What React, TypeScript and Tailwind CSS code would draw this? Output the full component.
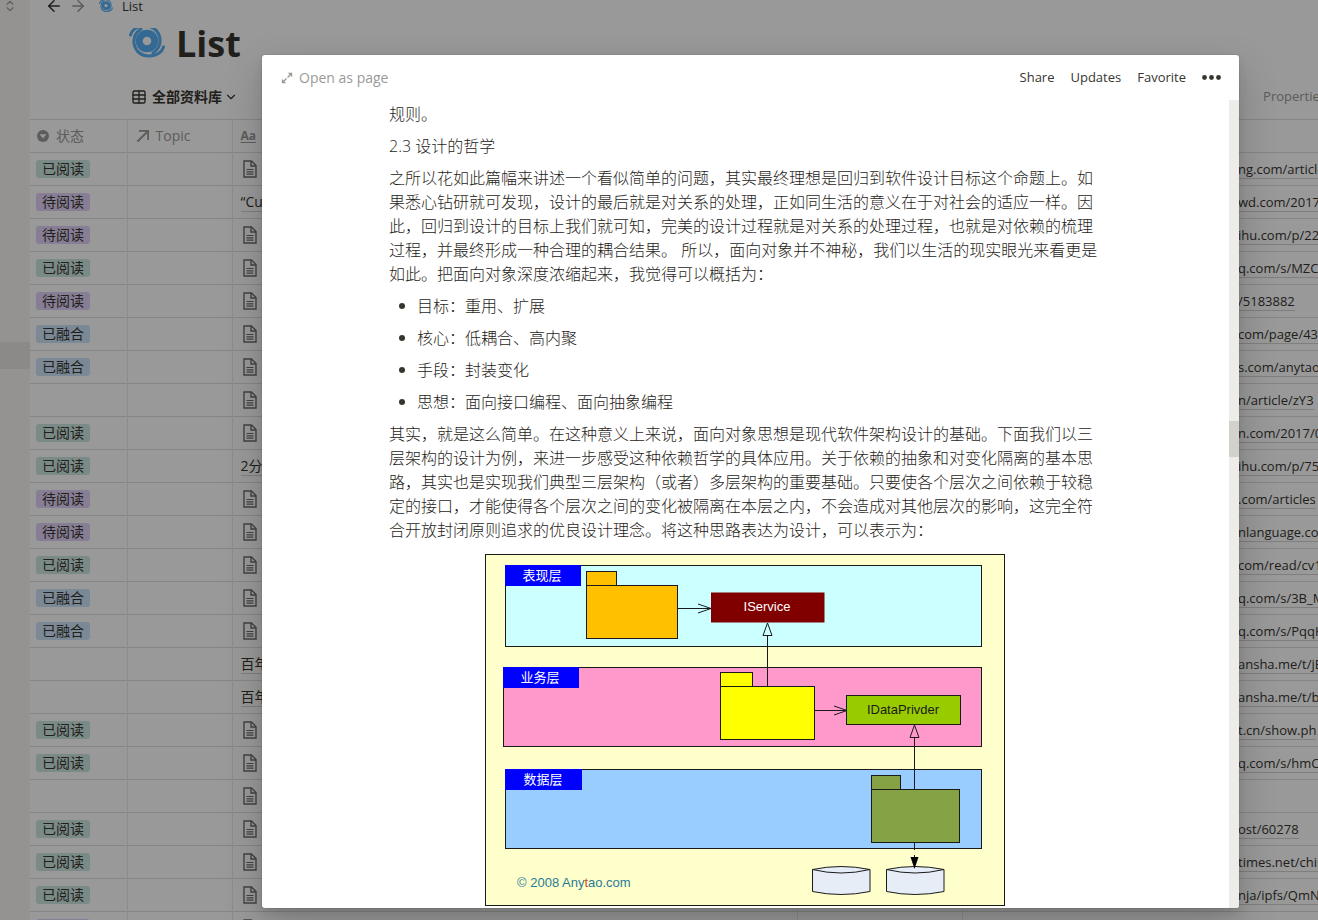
import React from 'react';
import { ArrowLeft, ArrowRight, ChevronDown, ChevronsUpDown, Table } from 'lucide-react';

type Status = 'read' | 'unread' | 'merged';

interface Row {
  status?: Status;
  title?: string;
  url?: string;
}

const STATUS: Record<Status, { label: string; className: string }> = {
  read: { label: '已阅读', className: 'bg-[#cce7e1]' },
  unread: { label: '待阅读', className: 'bg-[#e1d3f8]' },
  merged: { label: '已融合', className: 'bg-[#cce4f9]' },
};

const rows: Row[] = [
  { status: 'read', url: 'ng.com/articles' },
  { status: 'unread', title: '“Cu', url: 'wd.com/2017/' },
  { status: 'unread', url: 'ihu.com/p/22' },
  { status: 'read', url: 'q.com/s/MZC' },
  { status: 'unread', url: '/5183882' },
  { status: 'merged', url: 'com/page/43' },
  { status: 'merged', url: 's.com/anytao' },
  { url: 'n/article/zY3' },
  { status: 'read', url: 'n.com/2017/0' },
  { status: 'read', title: '2分', url: 'ihu.com/p/75' },
  { status: 'unread', url: '.com/articles' },
  { status: 'unread', url: 'nlanguage.com' },
  { status: 'read', url: 'com/read/cv1' },
  { status: 'merged', url: 'q.com/s/3B_M' },
  { status: 'merged', url: 'q.com/s/PqqH' },
  { title: '百年', url: 'ansha.me/t/jB' },
  { title: '百年', url: 'ansha.me/t/b' },
  { status: 'read', url: 't.cn/show.ph' },
  { status: 'read', url: 'q.com/s/hmC' },
  {},
  { status: 'read', url: 'ost/60278' },
  { status: 'read', url: 'times.net/chin' },
  { status: 'read', url: 'nja/ipfs/QmN' },
  { status: 'unread' },
];

const bullets = ['目标：重用、扩展', '核心：低耦合、高内聚', '手段：封装变化', '思想：面向接口编程、面向抽象编程'];

function Cyclone({ className }: { className: string }) {
  const arm = 'M12 5C6 9 4.500 14 5 19C6 27 12 32 20 32C28 32 33 28 34.500 23';
  return (
    <svg viewBox="0 0 36 36" className={className} fill="none" stroke="#55b0f5" strokeLinecap="round">
      <circle cx="18" cy="17" r="7.8" strokeWidth="7" />
      <path d={arm} strokeWidth="3" />
      <path d={arm} strokeWidth="3" transform="rotate(180 18 17)" />
    </svg>
  );
}

function DocIcon() {
  return (
    <svg viewBox="0 0 14 18" className="mb-px ml-0.5 h-[18px] w-3.5" fill="none" stroke="#6f6e6a" strokeWidth="1.4">
      <path d="M1 1H8.500L13 5.500V17H1Z" />
      <path d="M8 1V6H13" />
      <path d="M3.500 9.500H10.500M3.500 11.800H10.500M3.500 14.100H10.500" strokeWidth="1.2" />
    </svg>
  );
}

function StatusIcon() {
  return (
    <svg viewBox="0 0 14 14" className="h-3 w-3">
      <circle cx="7" cy="7" r="7" fill="#9b9a97" />
      <path d="M3 5H11L7 10Z" fill="#fff" />
    </svg>
  );
}

function RelationIcon() {
  return (
    <svg viewBox="0 0 14 14" className="h-3.5 w-3.5" fill="none" stroke="#9b9a97" strokeWidth="1.8">
      <path d="M1.500 12.500L12 2M3 1.900H12.100V11" />
    </svg>
  );
}

function ExpandIcon() {
  return (
    <svg viewBox="0 0 12 12" className="h-3 w-3" fill="#9b9a97" stroke="#9b9a97">
      <path d="M2.500 9.500L9.500 2.500" strokeWidth="1.4" strokeDasharray="4.2 1.5" />
      <path d="M6.800 0.800H11.200V5.200Z" stroke="none" />
      <path d="M0.800 6.800V11.200H5.200Z" stroke="none" />
    </svg>
  );
}

function Sidebar() {
  return (
    <aside className="w-[30px] shrink-0 bg-[#f7f6f3]">
      <ChevronsUpDown className="ml-[3px] -mt-px h-3.5 w-3.5 text-[#9b9a97]" />
      <div className="mt-[329px] h-[27px] bg-[#e8e7e4]" />
    </aside>
  );
}

function DatabaseTable() {
  return (
    <table className="w-full table-fixed border-collapse text-left text-sm">
      <colgroup>
        <col className="w-[97px]" />
        <col className="w-[105px]" />
        <col className="w-[565px]" />
        <col className="w-[165px]" />
        <col className="w-[268px]" />
        <col />
      </colgroup>
      <thead>
        <tr className="h-[33px] border-y border-[#dededc] text-[#9b9a97]">
          <th className="border-r border-[#e9e9e7] p-0 font-normal">
            <span className="flex items-center gap-[7px] pl-[7px]">
              <StatusIcon />
              状态
            </span>
          </th>
          <th className="border-r border-[#e9e9e7] p-0 font-normal">
            <span className="flex items-center gap-1.5 pl-2">
              <RelationIcon />
              Topic
            </span>
          </th>
          <th className="border-r border-[#e9e9e7] p-0 pl-2 text-xs font-bold underline underline-offset-2">Aa</th>
          <th className="border-r border-[#e9e9e7] p-0" />
          <th className="p-0" />
          <th className="p-0" />
        </tr>
      </thead>
      <tbody>
        {rows.map((row, index) => (
          <tr key={index} className="h-[33px] border-b border-[#dededc]">
            <td className="border-r border-[#e9e9e7] p-0 pl-1.5">
              {row.status && (
                <span className={`flex h-[18px] w-fit items-center rounded-[3px] px-1.5 ${STATUS[row.status].className}`}>
                  {STATUS[row.status].label}
                </span>
              )}
            </td>
            <td className="border-r border-[#e9e9e7] p-0" />
            <td className="border-r border-[#e9e9e7] p-0 pl-2">
              {row.title ? <span className="border-b border-[#d5d4d2]">{row.title}</span> : <DocIcon />}
            </td>
            <td className="border-r border-[#e9e9e7] p-0" />
            <td className="p-0" />
            <td className="overflow-hidden p-0 pl-2 text-[13px] whitespace-nowrap">
              {row.url && (
                <a href="#" className="border-b border-[#d5d4d2]">
                  {row.url}
                </a>
              )}
            </td>
          </tr>
        ))}
      </tbody>
    </table>
  );
}

interface FolderProps {
  x: number;
  y: number;
  width: number;
  tab: number;
  fill: string;
}

function Folder({ x, y, width, tab, fill }: FolderProps) {
  return (
    <g fill={fill} stroke="#1a1a1a">
      <rect x={x} y={y} width={tab} height="14" />
      <rect x={x} y={y + 14} width={width} height="53" />
    </g>
  );
}

function Cylinder({ x }: { x: number }) {
  return (
    <g transform={`translate(${x} 315.5)`} fill="#e6edf7" stroke="#1a1a1a">
      <path d="M0 0Q28.500 -6 57.500 0V22Q28.500 28 0 22Z" />
      <path d="M0 0Q28.500 7 57.500 0" fill="none" />
    </g>
  );
}

function LayerDiagram() {
  return (
    <svg viewBox="0 0 520 352" className="mx-auto mt-1 block w-[520px] max-w-full shrink-0" fontSize="13">
      <rect x="0.5" y="0.5" width="519" height="351" fill="#ffffcc" stroke="#1a1a1a" />
      <g stroke="#1a1a1a">
        <rect x="20.5" y="11.5" width="476" height="81" fill="#ccffff" />
        <rect x="18.5" y="113.5" width="478" height="79" fill="#ff99cc" />
        <rect x="20.5" y="215.5" width="476" height="79" fill="#99ccff" />
      </g>
      <g fill="#0000ff">
        <rect x="20" y="11" width="76" height="21" />
        <rect x="18" y="113" width="76" height="21" />
        <rect x="20" y="215" width="77" height="21" />
      </g>
      <g fill="#ffffff" fontWeight="400" textAnchor="middle">
        <text x="57" y="26">表现层</text>
        <text x="55" y="128">业务层</text>
        <text x="58" y="230">数据层</text>
      </g>

      <Folder x={101.5} y={17.5} width={91} tab={30} fill="#ffc000" />
      <Folder x={235.5} y={118.5} width={94} tab={32} fill="#ffff00" />
      <Folder x={386.5} y={221.5} width={88} tab={29} fill="#85a244" />
      <rect x="226" y="38.500" width="113.500" height="30" fill="#800000" />
      <rect x="361.5" y="141.5" width="114" height="29" fill="#99cc00" stroke="#1a1a1a" />

      {/* 箭头 */}
      <g fill="none" stroke="#1a1a1a">
        <path d="M192.500 54.500H226M213 50L226 54.500L213 59" />
        <path d="M329.500 156.500H362M349 152L362 156.500L349 161" />
        <path d="M282.500 132V81.500M282.500 69L287 81.500H278Z" />
        <path d="M429.500 235V183.500M429.500 171L434 183.500H425Z" />
        <path d="M429.500 289V296M429.500 301V304" />
      </g>
      <Cylinder x={327.5} />
      <Cylinder x={401.5} />
      <path d="M425.500 303H433.500L429.500 315Z" fill="#000" />

      <g className="font-['Liberation_Sans',Arial,sans-serif]" fontWeight="400">
        <text x="282" y="57" textAnchor="middle" fill="#ffffff">IService</text>
        <text x="418" y="160" textAnchor="middle" fill="#1a1a1a">IDataPrivder</text>
        <text x="32" y="333" fill="#1f7a99">
          © 2008 Any<tspan fill="#d04a20">t</tspan>ao.com
        </text>
      </g>
    </svg>
  );
}

function PageModal() {
  return (
    <div
      role="dialog"
      aria-label="Page preview"
      className="flex min-w-0 flex-1 flex-col overflow-hidden rounded-[3px] bg-white shadow-[0_0_0_1px_rgba(15,15,15,0.05),0_5px_10px_rgba(15,15,15,0.1),0_15px_40px_rgba(15,15,15,0.2)]"
    >
      <header className="flex h-[45px] shrink-0 items-center justify-between pr-[18px] pl-[19px] text-[13px]">
        <button className="flex items-center gap-1.5 text-sm text-[#9b9a97]">
          <ExpandIcon />
          Open as page
        </button>
        <div className="flex items-center gap-4">
          <button>Share</button>
          <button>Updates</button>
          <button>Favorite</button>
          <button aria-label="More">
            <svg viewBox="0 0 19 5" className="h-[5px] w-[19px]" fill="#37352f">
              <circle cx="2.5" cy="2.5" r="2.4" />
              <circle cx="9.5" cy="2.5" r="2.4" />
              <circle cx="16.5" cy="2.5" r="2.4" />
            </svg>
          </button>
        </div>
      </header>

      <div className="flex min-h-0 flex-1">
        <article className="flex min-w-0 flex-1 flex-col gap-2 overflow-hidden pt-0.5 pr-32 pl-[127px] leading-6 font-light text-[#1f1d19]">
          <p>规则。</p>
          <p>2.3 设计的哲学</p>
          <p>
            之所以花如此篇幅来讲述一个看似简单的问题，其实最终理想是回归到软件设计目标这个命题上。如果悉心钻研就可发现，设计的最后就是对关系的处理，正如同生活的意义在于对社会的适应一样。因此，回归到设计的目标上我们就可知，完美的设计过程就是对关系的处理过程，也就是对依赖的梳理过程，并最终形成一种合理的耦合结果。 所以，面向对象并不神秘，我们以生活的现实眼光来看更是如此。把面向对象深度浓缩起来，我觉得可以概括为：
          </p>
          <ul className="flex flex-col gap-2">
            {bullets.map((text) => (
              <li key={text} className="flex items-center gap-3 pl-2.5">
                <span className="h-1.5 w-1.5 rounded-full bg-[#37352f]" />
                {text}
              </li>
            ))}
          </ul>
          <p>
            其实，就是这么简单。在这种意义上来说，面向对象思想是现代软件架构设计的基础。下面我们以三层架构的设计为例，来进一步感受这种依赖哲学的具体应用。关于依赖的抽象和对变化隔离的基本思路，其实也是实现我们典型三层架构（或者）多层架构的重要基础。只要使各个层次之间依赖于较稳定的接口，才能使得各个层次之间的变化被隔离在本层之内，不会造成对其他层次的影响，这完全符合开放封闭原则追求的优良设计理念。将这种思路表达为设计，可以表示为：
          </p>
          <LayerDiagram />
        </article>
        <div className="w-2.5 shrink-0 bg-[#edece9] pt-[321px]">
          <div className="h-9 bg-[#d3d1cb]" />
        </div>
      </div>
    </div>
  );
}

export default function App() {
  return (
    <div className="relative flex h-screen overflow-hidden bg-white font-['Open_Sans','Noto_Sans_CJK_SC',sans-serif] text-[#37352f]">
      <Sidebar />
      <main className="min-w-0 flex-1">
        <nav className="-mt-4 flex h-11 items-center pl-[15px] text-[13px]">
          <ArrowLeft className="h-[18px] w-[18px]" />
          <ArrowRight className="ml-1.5 h-[18px] w-[18px] text-[#9b9a97]" />
          <Cyclone className="ml-3 h-3.5 w-3.5" />
          <span className="ml-[9px] leading-3">List</span>
        </nav>
        <div className="flex h-[52px] items-start gap-[11px] overflow-hidden pl-[99px]">
          <Cyclone className="-mt-1 h-9 w-9 shrink-0" />
          <h1 className="text-4xl leading-8 font-bold">List</h1>
        </div>
        <div className="flex h-[39px] items-center justify-between overflow-hidden pb-1.5 pl-[101px] text-sm">
          <button className="flex items-center font-semibold">
            <Table className="mr-[5px] h-4 w-4" />
            全部资料库
            <ChevronDown className="ml-0.5 h-3.5 w-3.5" />
          </button>
          <button className="-mr-2 text-[13px] text-[#9b9a97]">Properties</button>
        </div>
        <DatabaseTable />
      </main>

      <div className="absolute inset-0 flex bg-black/40 pt-[55px] pr-[79px] pb-3 pl-[262px]">
        <PageModal />
      </div>
    </div>
  );
}
